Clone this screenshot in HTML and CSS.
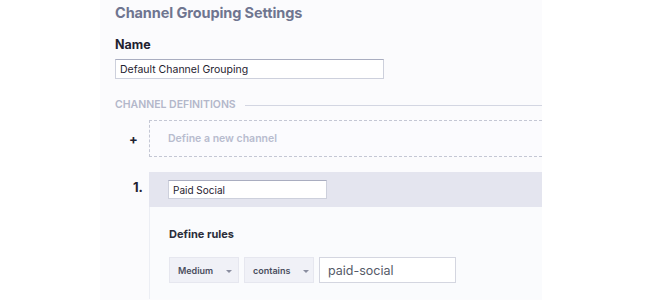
FILE: index.html
```html
<!DOCTYPE html>
<html lang="en">
<head>
    <meta charset="UTF-8">
    <title>Channel Grouping Settings</title>
    <link rel="stylesheet" href="styles.css">
</head>
<body>
    <div class="page">
        <h1 class="title">Channel Grouping Settings</h1>

        <label class="label" for="name">Name</label>
        <input class="text-input name-input" id="name" type="text" value="Default Channel Grouping">

        <div class="section-head">
            <span>Channel Definitions</span>
            <span class="rule"></span>
        </div>

        <div class="row">
            <div class="marker plus">+</div>
            <div class="new-channel">Define a new channel</div>
        </div>

        <div class="row channel">
            <div class="marker num">1.</div>
            <div class="channel-card">
                <div class="channel-head">
                    <input class="text-input channel-input" type="text" value="Paid Social">
                </div>
                <div class="channel-body">
                    <div class="rules-title">Define rules</div>
                    <div class="rule-line">
                        <div class="select">Medium <span class="caret"></span></div>
                        <div class="select">contains <span class="caret"></span></div>
                        <input class="value-input" type="text" value="paid-social">
                    </div>
                </div>
            </div>
        </div>
    </div>
</body>
</html>
```

FILE: styles.css
```css
* {
    margin: 0;
    padding: 0;
    box-sizing: border-box;
    font-family: 'Inter', 'Liberation Sans', sans-serif;
}

body {
    background: #ffffff;
    overflow: hidden;
}

.page {
    width: 442px;
    height: 300px;
    margin-left: 100px;
    padding: 3px 0 0 15px;
    background: #fbfbfd;
}

.title {
    font-size: 14.5px;
    font-weight: 700;
    color: #6f7590;
    line-height: 20px;
    letter-spacing: -0.1px;
}

.label {
    display: block;
    margin-top: 14px;
    font-size: 12.5px;
    font-weight: 700;
    color: #1f2230;
    line-height: 16px;
}

.text-input {
    display: block;
    height: 20px;
    padding: 0 4px;
    font-size: 10.5px;
    color: #1f2230;
    background: #fff;
    border: 1px solid #cdd0dc;
    border-top-color: #a9adc0;
    outline: none;
}

.name-input {
    width: 269px;
    margin-top: 6px;
}

.section-head {
    display: flex;
    align-items: center;
    gap: 9px;
    margin-top: 19px;
    font-size: 10.5px;
    font-weight: 600;
    text-transform: uppercase;
    color: #b3b7ca;
    line-height: 14px;
}

.section-head .rule {
    flex: 1;
    height: 1px;
    background: #d3d6e2;
}

.row {
    display: flex;
    margin-top: 8px;
}

.marker {
    width: 34px;
    flex-shrink: 0;
    display: flex;
    align-items: center;
    padding-left: 15px;
    font-weight: 700;
    color: #1f2230;
}

.plus {
    font-size: 13px;
    padding-left: 14px;
}

.new-channel {
    flex: 1;
    height: 37px;
    display: flex;
    align-items: center;
    padding-left: 18px;
    border: 1px dashed #c4c7d4;
    border-right: none;
    font-size: 10.5px;
    font-weight: 600;
    color: #b8bcce;
    background: #fbfbfe;
}

.channel {
    margin-top: 15px;
}

.channel .num {
    align-items: flex-start;
    padding-top: 7px;
    font-size: 13px;
    padding-left: 18px;
}

.channel-card {
    flex: 1;
}

.channel-head {
    height: 35px;
    padding: 8px 0 0 19px;
    background: #e4e5ef;
}

.channel-input {
    width: 159px;
    height: 19px;
    font-size: 10px;
}

.channel-body {
    height: 92px;
    padding: 20px 0 0 19px;
    border-left: 1px solid #eceef4;
    background: #fafbfd;
}

.rules-title {
    font-size: 11px;
    font-weight: 700;
    color: #2a2d3a;
    line-height: 14px;
}

.rule-line {
    display: flex;
    gap: 5px;
    margin-top: 16px;
}

.select {
    width: 70px;
    height: 26px;
    display: flex;
    align-items: center;
    padding-left: 8px;
    gap: 13px;
    font-size: 9px;
    font-weight: 600;
    color: #4a4e5e;
    background: #f0f1f7;
    border: 1px solid #e6e7ef;
}

.caret {
    width: 0;
    height: 0;
    border-left: 3px solid transparent;
    border-right: 3px solid transparent;
    border-top: 3px solid #8a8ea0;
    margin-top: 2px;
}

.value-input {
    width: 137px;
    height: 26px;
    padding: 0 8px;
    font-size: 12.5px;
    color: #555a68;
    background: #fff;
    border: 1px solid #d4d6e0;
    outline: none;
}
```
